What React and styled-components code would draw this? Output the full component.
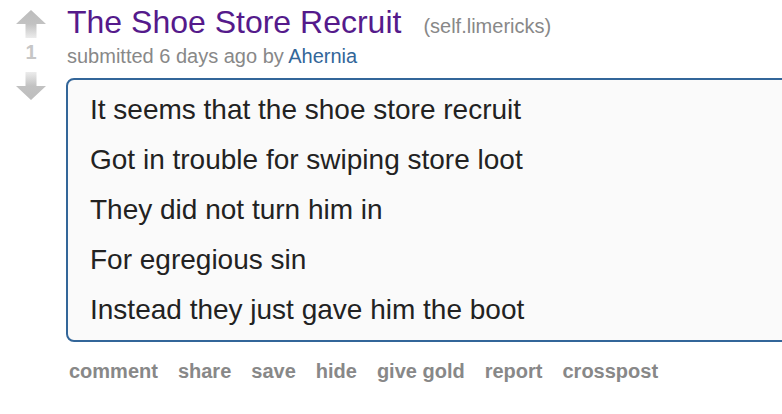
import React from "react";
import styled, { createGlobalStyle } from "styled-components";

const Global = createGlobalStyle`
  html, body { margin: 0; padding: 0; background: #fff; }
  body { font-family: "Liberation Sans", Arial, Helvetica, sans-serif; overflow: hidden; }
`;

const Page = styled.div`
  display: flex;
  align-items: flex-start;
  padding-top: 3px;
  width: 782px;
  height: 414px;
  overflow: hidden;
`;

const VoteColumn = styled.div`
  width: 62px;
  flex: none;
  display: flex;
  flex-direction: column;
  align-items: center;
  padding-top: 7px;
`;

const Score = styled.div`
  font-size: 20px;
  line-height: 24px;
  margin: 2px 0 8px;
  color: #c6c6c6;
  font-weight: 700;
`;

const Entry = styled.div`
  flex: none;
  width: 760px;
  margin-left: 4px;
  display: flex;
  flex-direction: column;
`;

const TitleRow = styled.div`
  display: flex;
  align-items: baseline;
  padding-left: 1px;
`;

const Title = styled.a`
  font-size: 32px;
  line-height: 38px;
  color: #551a8b;
  text-decoration: none;
`;

const Domain = styled.span`
  font-size: 20px;
  color: #888;
  margin-left: 22px;
`;

const Tagline = styled.div`
  margin-top: 3px;
  padding-left: 1px;
  font-size: 20px;
  line-height: 24px;
  color: #888;
`;

const Author = styled.a`
  color: #369;
  text-decoration: none;
`;

const Body = styled.div`
  margin-top: 10px;
  border: 2px solid #369;
  border-radius: 8px;
  background: #fafafa;
  padding: 5px 22px;
  color: #222;
`;

const Line = styled.p`
  margin: 0;
  font-size: 28px;
  line-height: 50px;
`;

const Actions = styled.ul`
  list-style: none;
  margin: 17px 0 0;
  padding: 0 0 0 3px;
  display: flex;
  gap: 20px;
`;

const Action = styled.li`
  font-size: 20px;
  line-height: 24px;
  font-weight: 700;
  color: #888;
`;

const Following = styled.div`
  margin-top: 27px;
  padding-left: 151px;
  display: flex;
  gap: 41px;
  font-size: 20px;
  line-height: 24px;
  color: #111;
`;

const Arrow = ({ down }) => (
  <svg width="30" height="28" viewBox="0 0 30 28" style={{ display: "block" }}>
    <defs>
      <linearGradient id={down ? "gd" : "gu"} x1="0" y1={down ? "1" : "0"} x2="0" y2={down ? "0" : "1"}>
        <stop offset="0" stopColor="#bdbdbd" />
        <stop offset="0.5" stopColor="#c2c2c2" />
        <stop offset="1" stopColor="#ececec" />
      </linearGradient>
    </defs>
    <polygon
      points={
        down
          ? "15,28 30,14 20.5,14 20.5,0 9.5,0 9.5,14 0,14"
          : "15,0 30,14 20.5,14 20.5,28 9.5,28 9.5,14 0,14"
      }
      fill={`url(#${down ? "gd" : "gu"})`}
    />
  </svg>
);

const lines = [
  "It seems that the shoe store recruit",
  "Got in trouble for swiping store loot",
  "They did not turn him in",
  "For egregious sin",
  "Instead they just gave him the boot",
];

const actions = ["comment", "share", "save", "hide", "give gold", "report", "crosspost"];

export default function App() {
  return (
    <>
      <Global />
      <Page>
        <VoteColumn>
          <Arrow />
          <Score>1</Score>
          <Arrow down />
        </VoteColumn>
        <Entry>
          <TitleRow>
            <Title>The Shoe Store Recruit</Title>
            <Domain>(self.limericks)</Domain>
          </TitleRow>
          <Tagline>
            submitted 6 days ago by <Author>Ahernia</Author>
          </Tagline>
          <Body>
            {lines.map((l) => (
              <Line key={l}>{l}</Line>
            ))}
          </Body>
          <Actions>
            {actions.map((a) => (
              <Action key={a}>{a}</Action>
            ))}
          </Actions>
          <Following>
            <span>(</span>
            <span>)</span>
          </Following>
        </Entry>
      </Page>
    </>
  );
}
